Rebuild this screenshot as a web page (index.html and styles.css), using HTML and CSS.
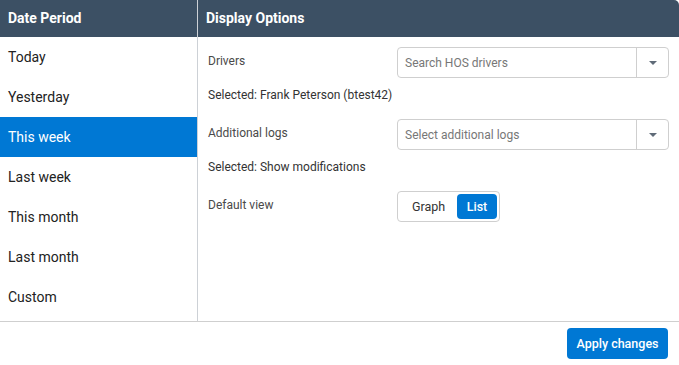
FILE: index.html
```html
<!DOCTYPE html>
<html lang="en">
<head>
    <meta charset="utf-8">
    <title>HOS Options</title>
    <link rel="stylesheet" href="styles.css">
</head>
<body>
    <div class="dialog">
        <div class="panels">
            <div class="period">
                <div class="panel-header">Date Period</div>
                <ul class="period-list">
                    <li>Today</li>
                    <li>Yesterday</li>
                    <li class="active">This week</li>
                    <li>Last week</li>
                    <li>This month</li>
                    <li>Last month</li>
                    <li>Custom</li>
                </ul>
            </div>

            <div class="options">
                <div class="panel-header header-right">Display Options</div>
                <div class="options-body">
                    <div class="field">
                        <label>Drivers</label>
                        <div class="select">
                            <span class="placeholder">Search HOS drivers</span>
                            <span class="select-arrow"></span>
                        </div>
                    </div>
                    <p class="selected">Selected: Frank Peterson (btest42)</p>

                    <div class="field field-spaced">
                        <label>Additional logs</label>
                        <div class="select">
                            <span class="placeholder">Select additional logs</span>
                            <span class="select-arrow"></span>
                        </div>
                    </div>
                    <p class="selected">Selected: Show modifications</p>

                    <div class="field field-view">
                        <label>Default view</label>
                        <div class="toggle">
                            <button class="toggle-btn">Graph</button>
                            <button class="toggle-btn on">List</button>
                        </div>
                    </div>
                </div>
            </div>
        </div>

        <div class="footer">
            <button class="btn-apply">Apply changes</button>
        </div>
    </div>
</body>
</html>
```

FILE: styles.css
```css
* {
    margin: 0;
    padding: 0;
    box-sizing: border-box;
}

body {
    font-family: Roboto, 'Liberation Sans', Arial, sans-serif;
    background: white;
    color: #222;
    width: 679px;
    height: 365px;
    overflow: hidden;
}

.dialog {
    display: flex;
    flex-direction: column;
    height: 365px;
}

.panels {
    display: flex;
    height: 322px;
    border-bottom: 1px solid #cfcfcf;
}

.panel-header {
    height: 37px;
    background: #3c5064;
    color: white;
    font-weight: 700;
    font-size: 14px;
    line-height: 37px;
    padding-left: 8px;
}

.header-right {
    border-top-right-radius: 5px;
}

/* left column */
.period {
    width: 198px;
    border-right: 1px solid #cdd1d6;
}

.period-list {
    list-style: none;
}

.period-list li {
    height: 40px;
    line-height: 40px;
    padding-left: 8px;
    font-size: 14px;
    color: #222;
}

.period-list li.active {
    background: #0078d4;
    color: white;
}

/* right column */
.options {
    flex: 1;
}

.options-body {
    padding: 10px 10px 0 10px;
}

.field {
    display: flex;
    align-items: center;
}

.field label {
    width: 189px;
    font-size: 12px;
    color: #4a4a4a;
    margin-top: -3px;
}

.field-spaced {
    margin-top: 17px;
}

.field-view {
    margin-top: 17px;
}

.select {
    flex: 1;
    height: 31px;
    border: 1px solid #cfcfcf;
    border-radius: 4px;
    display: flex;
    align-items: center;
}

.placeholder {
    flex: 1;
    padding-left: 7px;
    font-size: 12px;
    color: #777;
}

.select-arrow {
    width: 32px;
    height: 29px;
    border-left: 1px solid #cfcfcf;
    position: relative;
}

.select-arrow:after {
    content: "";
    position: absolute;
    left: 12px;
    top: 13px;
    border-left: 4px solid transparent;
    border-right: 4px solid transparent;
    border-top: 4px solid #5f6b78;
}

.selected {
    margin-top: 10px;
    font-size: 12px;
    line-height: 14px;
    color: #333;
}

.toggle {
    display: flex;
    height: 31px;
    padding: 2px;
    border: 1px solid #cfcfcf;
    border-radius: 4px;
}

.toggle-btn {
    border: none;
    background: transparent;
    font-family: inherit;
    font-size: 12.5px;
    color: #333;
    width: 57px;
    height: 25px;
    border-radius: 4px;
}

.toggle-btn.on {
    background: #0078d4;
    color: white;
    font-weight: 500;
    width: 40px;
}

/* footer */
.footer {
    flex: 1;
    display: flex;
    justify-content: flex-end;
    align-items: flex-start;
    padding: 6px 11px 0 0;
}

.btn-apply {
    background: #0078d4;
    color: white;
    border: none;
    border-radius: 4px;
    width: 101px;
    height: 31px;
    font-family: inherit;
    font-size: 12.5px;
    font-weight: 500;
    cursor: pointer;
}
```
